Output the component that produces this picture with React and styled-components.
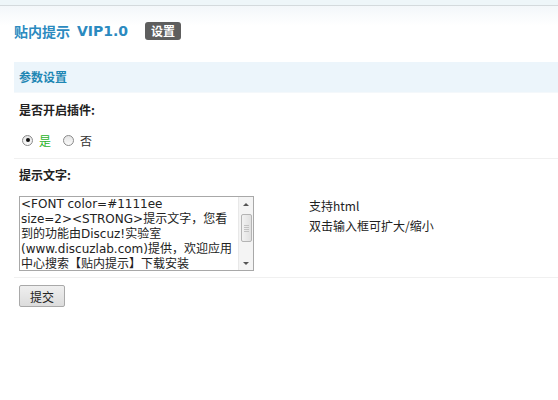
import React from "react";
import styled, { createGlobalStyle } from "styled-components";

const Global = createGlobalStyle`
  html, body { margin: 0; padding: 0; background: #fff; }
  body {
    font-family: "Noto Sans CJK SC", "DejaVu Sans", sans-serif;
    font-size: 12px;
    color: #333;
  }
`;

const Page = styled.div`
  width: 558px;
  height: 400px;
  overflow: hidden;
`;

const TopBar = styled.div`
  height: 5px;
  background: #eef6f9;
  border-bottom: 1px solid #d4dadd;
`;

const Header = styled.div`
  display: flex;
  align-items: center;
  height: 50px;
  padding: 0 14px;
  background: linear-gradient(#f3f7fa, #fff 40%);
`;

const Title = styled.h1`
  margin: 0;
  font-family: "DejaVu Sans", "Noto Sans CJK SC", sans-serif;
  font-size: 14px;
  font-weight: bold;
  color: #2b8abf;
  display: flex;
  align-items: center;
`;

const Version = styled.span`
  margin-left: 7px;
`;

const Badge = styled.span`
  margin-left: 17px;
  padding: 0 6px;
  height: 18px;
  line-height: 18px;
  border-radius: 3px;
  background: #5e5e5e;
  color: #fff;
  font-weight: bold;
  font-size: 12px;
`;

const Body = styled.div`
  padding: 6px 0 0 14px;
`;

const SectionHead = styled.div`
  height: 30px;
  line-height: 30px;
  padding-left: 5px;
  background: #ecf5fb;
  border-bottom: 1px solid #f4f8fb;
  color: #1f87b4;
  font-weight: bold;
`;

const Label = styled.div`
  padding: 0 5px;
  height: 20px;
  line-height: 20px;
  font-weight: bold;
  color: #222;
  margin-top: ${(p) => p.$top}px;
`;

const Row = styled.div`
  display: flex;
  align-items: center;
  padding: 0 5px 0 8px;
  height: 24px;
  margin-top: 8px;
`;

const Option = styled.label`
  display: flex;
  align-items: center;
  margin-right: 12px;
  color: ${(p) => (p.$on ? "#2bb32b" : "#333")};
`;

const Radio = styled.span`
  box-sizing: border-box;
  width: 11px;
  height: 11px;
  border-radius: 50%;
  border: 1px solid #8a8a8a;
  background: linear-gradient(#e4e4e4, #fbfbfb);
  margin-right: 6px;
  display: flex;
  align-items: center;
  justify-content: center;
  &::after {
    content: "";
    width: 4px;
    height: 4px;
    border-radius: 50%;
    background: ${(p) => (p.$checked ? "#111" : "transparent")};
  }
`;

const Divider = styled.div`
  height: 1px;
  background: #f0f0f0;
  margin-top: ${(p) => p.$top}px;
`;

const FieldRow = styled.div`
  display: grid;
  grid-template-columns: 290px 1fr;
  padding-left: 5px;
  margin-top: 11px;
`;

const TextFrame = styled.div`
  display: flex;
  width: 235px;
  height: 75px;
  box-sizing: border-box;
  border: 1px solid #a8a8a8;
  background: #fff;
`;

const TextBox = styled.textarea`
  flex: 1;
  min-width: 0;
  box-sizing: border-box;
  height: 100%;
  margin: 0;
  padding: 0 1px;
  border: none;
  outline: none;
  font-family: "DejaVu Sans", "Noto Sans CJK SC", sans-serif;
  font-size: 12px;
  line-height: 15px;
  color: #222;
  resize: none;
  overflow: hidden;
`;

const ScrollBar = styled.div`
  width: 14px;
  display: flex;
  flex-direction: column;
  align-items: center;
  background: #f4f4f4;
  border-left: 1px solid #e8e8e8;
`;

const Arrow = styled.div`
  height: 14px;
  display: flex;
  align-items: center;
  justify-content: center;
  &::after {
    content: "";
    border-left: 3px solid transparent;
    border-right: 3px solid transparent;
    ${(p) =>
      p.$down
        ? "border-top: 3px solid #555;"
        : "border-bottom: 3px solid #555;"}
  }
`;

const Thumb = styled.div`
  box-sizing: border-box;
  width: 11px;
  height: 28px;
  margin-top: 3px;
  border: 1px solid #b4b4b4;
  border-radius: 2px;
  background: linear-gradient(90deg, #f2f2f2, #e0e0e0);
  display: flex;
  flex-direction: column;
  align-items: center;
  justify-content: center;
  gap: 1px;
`;

const Grip = styled.span`
  width: 5px;
  height: 1px;
  background: #c2c2c2;
`;

const Spacer = styled.div`
  flex: 1;
`;

const Tips = styled.div`
  line-height: 20px;
  color: #222;
`;

const Submit = styled.button`
  margin: 7px 0 0 5px;
  width: 46px;
  height: 22px;
  border: 1px solid #a9a9a9;
  border-radius: 2px;
  background: linear-gradient(#efefef, #dcdcdc);
  font-family: inherit;
  font-size: 12px;
  color: #222;
  padding: 0;
`;

// word joiner keeps "size=2><STRONG>" together like the original browser did
const tipText =
  "<FONT color=#1111ee size=2>\u2060<STRONG>提示文字，您看到的功能由Discuz!实验室(www.discuzlab.com)提供，欢迎应用中心搜索【贴内提示】下载安装";

export default function App() {
  return (
    <Page>
      <Global />
      <TopBar />
      <Header>
        <Title>
          贴内提示<Version>VIP1.0</Version>
        </Title>
        <Badge>设置</Badge>
      </Header>
      <Body>
        <SectionHead>参数设置</SectionHead>
        <Label $top={7}>是否开启插件:</Label>
        <Row>
          <Option $on>
            <Radio $checked />是
          </Option>
          <Option>
            <Radio />否
          </Option>
        </Row>
        <Divider $top={6} />
        <Label $top={6}>提示文字:</Label>
        <FieldRow>
          <TextFrame>
            <TextBox readOnly defaultValue={tipText} />
            <ScrollBar>
              <Arrow />
              <Thumb>
                <Grip />
                <Grip />
                <Grip />
                <Grip />
              </Thumb>
              <Spacer />
              <Arrow $down />
            </ScrollBar>
          </TextFrame>
          <Tips>
            支持html
            <br />
            双击输入框可扩大/缩小
          </Tips>
        </FieldRow>
        <Divider $top={6} />
        <Submit>提交</Submit>
      </Body>
    </Page>
  );
}
